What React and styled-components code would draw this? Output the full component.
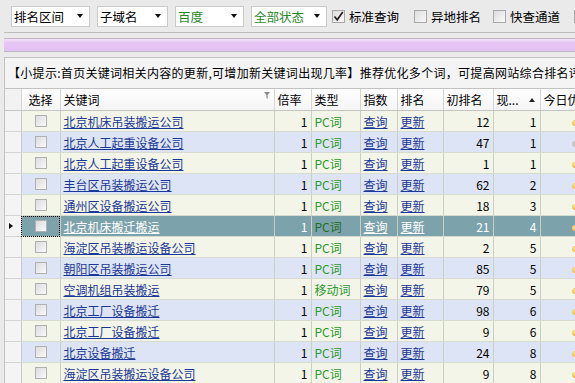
import React from "react";
import styled, { createGlobalStyle } from "styled-components";

const GlobalStyle = createGlobalStyle`
  html, body {
    margin: 0;
    padding: 0;
    background: #eaeaea;
  }
  body {
    font-family: "Noto Sans CJK SC", "Noto Sans", sans-serif;
    font-size: 12px;
    color: #000;
  }
`;

const Page = styled.div`
  width: 575px;
  height: 383px;
  overflow: hidden;
  padding-left: 4px;
  box-sizing: border-box;
  display: flex;
  flex-direction: column;
`;

const Toolbar = styled.div`
  flex: none;
  height: 32px;
  display: flex;
  align-items: center;
  padding-left: 7px;
  gap: 7px;
  border-bottom: 1px solid #bcbcbc;
  white-space: nowrap;
  overflow: hidden;
`;

const Select = styled.div`
  box-sizing: border-box;
  width: ${(p) => p.$w}px;
  height: 21px;
  flex: none;
  background: #fff;
  border: 1px solid #cacaca;
  display: flex;
  align-items: center;
  justify-content: space-between;
  padding: 0 6px 0 2px;
  font-size: 12.5px;
  color: ${(p) => (p.$green ? "#1f8a1f" : "#000")};
`;

const Caret = styled.span`
  width: 0;
  height: 0;
  border-left: 3.5px solid transparent;
  border-right: 3.5px solid transparent;
  border-top: 4px solid #111;
`;

const CheckItem = styled.label`
  display: flex;
  align-items: center;
  gap: 4px;
  margin-left: ${(p) => p.$ml}px;
  font-size: 12.5px;
  flex: none;
`;

const Box = styled.span`
  box-sizing: border-box;
  width: 13px;
  height: 13px;
  flex: none;
  border: 1px solid #a9a9a9;
  background: linear-gradient(135deg, #dcdcdc, #fafafa);
  display: flex;
  align-items: center;
  justify-content: center;
`;

const PurpleBar = styled.div`
  flex: none;
  margin-top: 5px;
  height: 12px;
  border-top: 1px solid #bdb6c0;
  border-bottom: 1px solid #bdb6c0;
  background: linear-gradient(#f3e2fa 0%, #e6c6f3 30%, #e2c0f1 100%);
`;

const Hint = styled.div`
  flex: none;
  margin-top: 5px;
  box-sizing: border-box;
  height: 32px;
  border: 1px solid #c2c2c2;
  border-right: none;
  background: #f4f4f4;
  padding-left: 3px;
  line-height: 30px;
  white-space: nowrap;
  overflow: hidden;
  font-size: 12px;
  letter-spacing: 0.3px;
`;

const GridWrap = styled.div`
  overflow: hidden;
  border-left: 1px solid #c2c2c2;
`;

const Table = styled.table`
  border-collapse: collapse;
  table-layout: fixed;
  width: 615px;
`;

const HeadCell = styled.th`
  position: relative;
  height: 21px;
  padding: 0 3px;
  font-weight: normal;
  white-space: nowrap;
  overflow: hidden;
  background: ${(p) => (p.$corner ? "#f2f2f2" : "linear-gradient(#ffffff, #f4f4f4)")};
  border-right: 1px solid #d6d6d6;
  border-bottom: 1px solid #c4c4c4;
  text-align: ${(p) => (p.$center ? "center" : "left")};
`;

const Row = styled.tr`
  background: ${(p) =>
    p.$sel ? "#7ca3ab" : p.$alt ? "#dde4f5" : "#f3f5e9"};
  color: ${(p) => (p.$sel ? "#fff" : "#000")};
`;

const RowHead = styled.td`
  background: #f4f4f4;
  border-bottom: 1px solid #d4d4d4;
  border-right: 1px solid #c8c8c8;
  padding: 0 0 0 4px;
`;

const Cell = styled.td`
  height: 20px;
  padding: 0 3px;
  white-space: nowrap;
  overflow: hidden;
  border-right: 1px solid #c9d0c3;
  border-bottom: 1px solid #d6dbd0;
  text-align: ${(p) => p.$align || "left"};
  outline: ${(p) => (p.$focus ? "1px dotted #000" : "none")};
  outline-offset: -1px;
`;

const CellBox = styled(Box)`
  width: 12px;
  height: 12px;
  margin: 0 auto;
  border-color: #b0b0b0;
`;

const Link = styled.a`
  color: ${(p) => (p.$sel ? "#fff" : "#1c3896")};
  text-decoration: underline;
  cursor: pointer;
`;

const TypeText = styled.span`
  color: ${(p) => (p.$sel ? "#1d6e1d" : "#2c9a2c")};
`;

const Pointer = styled.span`
  display: block;
  width: 0;
  height: 0;
  border-left: 4px solid #111;
  border-top: 3.5px solid transparent;
  border-bottom: 3.5px solid transparent;
`;

const SortUp = styled.span`
  position: absolute;
  right: 5px;
  top: 9px;
  width: 0;
  height: 0;
  border-left: 3.5px solid transparent;
  border-right: 3.5px solid transparent;
  border-bottom: 4px solid #222;
`;

const FilterIcon = styled.svg`
  position: absolute;
  right: 4px;
  top: 3px;
`;

const Dot = styled.span`
  display: inline-block;
  margin-left: 28px;
  width: 6px;
  height: 6px;
  border-radius: 50%;
  background: ${(p) => (p.$gray ? "#c9c9c9" : "radial-gradient(circle at 35% 35%, #ffe08a, #f0a020)")};
  vertical-align: middle;
`;

const rows = [
  ["北京机床吊装搬运公司", "PC词", 12, 1],
  ["北京人工起重设备公司", "PC词", 47, 1],
  ["北京人工起重设备公司", "PC词", 1, 1],
  ["丰台区吊装搬运公司", "PC词", 62, 2],
  ["通州区设备搬运公司", "PC词", 18, 3],
  ["北京机床搬迁搬运", "PC词", 21, 4],
  ["海淀区吊装搬运设备公司", "PC词", 2, 5],
  ["朝阳区吊装搬运公司", "PC词", 85, 5],
  ["空调机组吊装搬运", "移动词", 79, 5],
  ["北京工厂设备搬迁", "PC词", 98, 6],
  ["北京工厂设备搬迁", "PC词", 9, 6],
  ["北京设备搬迁", "PC词", 24, 8],
  ["海淀区吊装搬运设备公司", "PC词", 9, 8],
];

const SELECTED = 5;

function Check({ checked }) {
  return (
    <Box>
      {checked && (
        <svg width="11" height="11" viewBox="0 0 11 11">
          <path d="M1.5 5.5 L4.2 8.8 L9.8 1" fill="none" stroke="#222" strokeWidth="1.7" />
        </svg>
      )}
    </Box>
  );
}

export default function App() {
  return (
    <>
      <GlobalStyle />
      <Page>
        <Toolbar>
          <Select $w={79}>排名区间<Caret /></Select>
          <Select $w={71}>子域名<Caret /></Select>
          <Select $w={69} $green>百度<Caret /></Select>
          <Select $w={76} $green>全部状态<Caret /></Select>
          <CheckItem $ml={-2}><Check checked />标准查询</CheckItem>
          <CheckItem $ml={8}><Check />异地排名</CheckItem>
          <CheckItem $ml={5}><Check />快查通道</CheckItem>
          <CheckItem $ml={7}><Check /></CheckItem>
        </Toolbar>
        <PurpleBar />
        <Hint>【小提示:首页关键词相关内容的更新,可增加新关键词出现几率】推荐优化多个词，可提高网站综合排名评级</Hint>
        <GridWrap>
          <Table>
            <colgroup>
              <col style={{ width: 16 }} />
              <col style={{ width: 39 }} />
              <col style={{ width: 214 }} />
              <col style={{ width: 37 }} />
              <col style={{ width: 49 }} />
              <col style={{ width: 37 }} />
              <col style={{ width: 46 }} />
              <col style={{ width: 50 }} />
              <col style={{ width: 47 }} />
              <col style={{ width: 80 }} />
            </colgroup>
            <thead>
              <tr>
                <HeadCell $corner />
                <HeadCell $center>选择</HeadCell>
                <HeadCell>
                  关键词
                  <FilterIcon width="6" height="7" viewBox="0 0 6 7">
                    <path d="M0 0 H6 L3.6 3 V7 L2.4 6 V3 Z" fill="#8a8a8a" />
                  </FilterIcon>
                </HeadCell>
                <HeadCell>倍率</HeadCell>
                <HeadCell>类型</HeadCell>
                <HeadCell>指数</HeadCell>
                <HeadCell>排名</HeadCell>
                <HeadCell>初排名</HeadCell>
                <HeadCell>
                  现...
                  <SortUp />
                </HeadCell>
                <HeadCell>今日优化</HeadCell>
              </tr>
            </thead>
            <tbody>
              {rows.map(([kw, type, first, now], i) => {
                const sel = i === SELECTED;
                return (
                  <Row key={i} $alt={i % 2 === 1} $sel={sel}>
                    <RowHead>{sel && <Pointer />}</RowHead>
                    <Cell $focus={sel}>
                      <CellBox />
                    </Cell>
                    <Cell>
                      <Link $sel={sel}>{kw}</Link>
                    </Cell>
                    <Cell $align="right">1</Cell>
                    <Cell>
                      <TypeText $sel={sel}>{type}</TypeText>
                    </Cell>
                    <Cell>
                      <Link $sel={sel}>查询</Link>
                    </Cell>
                    <Cell>
                      <Link $sel={sel}>更新</Link>
                    </Cell>
                    <Cell $align="right">{first}</Cell>
                    <Cell $align="right">{now}</Cell>
                    <Cell>
                      <Dot $gray={i === 1} />
                    </Cell>
                  </Row>
                );
              })}
            </tbody>
          </Table>
        </GridWrap>
      </Page>
    </>
  );
}
